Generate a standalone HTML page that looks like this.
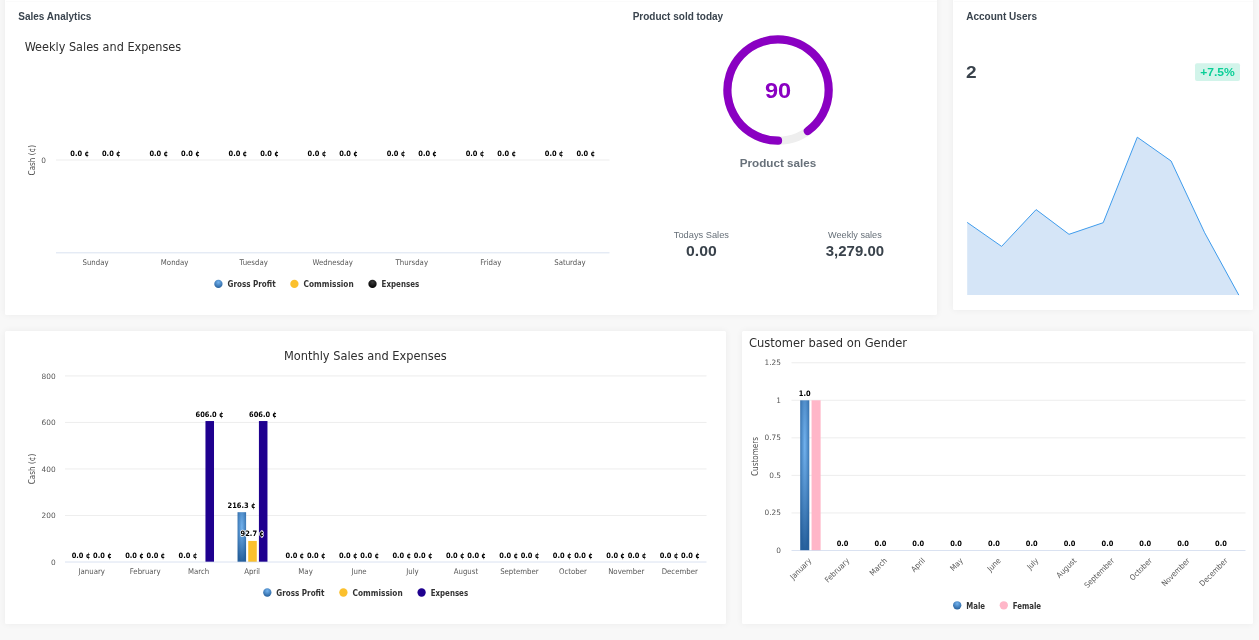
<!DOCTYPE html>
<html lang="en">
<head>
<meta charset="utf-8">
<title>Dashboard</title>
<style>
html,body{margin:0;padding:0}
body{width:1259px;height:640px;overflow:hidden;position:relative;background:#f8f8f8;font-family:"Liberation Sans", "DejaVu Sans", sans-serif}
.card{position:absolute;background:#fff;border-radius:1.5px;box-shadow:0 0 7px rgba(0,0,0,.055)}
svg{position:absolute;left:0;top:0;will-change:transform}
svg text{font-family:"DejaVu Sans Condensed", "DejaVu Sans", "Liberation Sans", sans-serif}
svg text.u{font-family:"Liberation Sans", "DejaVu Sans", sans-serif}
svg text.n{font-family:"DejaVu Sans", "Liberation Sans", sans-serif}
</style>
</head>
<body>
<div class="card" style="left:5px;top:-12px;width:932px;height:327px"></div>
<div class="card" style="left:953px;top:-12px;width:300px;height:322px"></div>
<div class="card" style="left:5px;top:331px;width:721px;height:293px"></div>
<div class="card" style="left:742px;top:331px;width:511px;height:293px"></div>
<svg width="1259" height="640" viewBox="0 0 1259 640">
<defs>
<radialGradient id="gB" cx="0.5" cy="0.3" r="0.7"><stop offset="0" stop-color="#72b2ee"/><stop offset="1" stop-color="#26609c"/></radialGradient>
<radialGradient id="gK" cx="0.5" cy="0.3" r="0.7"><stop offset="0" stop-color="#3a3a3a"/><stop offset="1" stop-color="#000"/></radialGradient>
</defs>
<rect x="6.00" y="1.00" width="931.00" height="1.00" fill="#fbfbfb"/>
<rect x="954.00" y="1.00" width="299.00" height="1.00" fill="#fbfbfb"/>
<text x="18.30" y="20.20" font-size="10.2" font-weight="bold" textLength="73" lengthAdjust="spacingAndGlyphs" class="u" fill="#3a444e">Sales Analytics</text>
<text x="632.70" y="20.20" font-size="10.2" font-weight="bold" textLength="90.5" lengthAdjust="spacingAndGlyphs" class="u" fill="#3a444e">Product sold today</text>
<text x="966.20" y="20.20" font-size="10.2" font-weight="bold" textLength="70.8" lengthAdjust="spacingAndGlyphs" class="u" fill="#3a444e">Account Users</text>
<text x="24.70" y="50.80" font-size="12.05" textLength="156.5" lengthAdjust="spacingAndGlyphs" fill="#2e2e2e">Weekly Sales and Expenses</text>
<path d="M56.00 160.00L609.50 160.00" stroke="#e6e6e6" stroke-width="0.72" fill="none"/>
<path d="M56.00 252.80L609.50 252.80" stroke="#ccd6eb" stroke-width="0.72" fill="none"/>
<text x="46.00" y="163.00" font-size="7.4" text-anchor="end" class="n" fill="#585858">0</text>
<text transform="translate(35.3 160.2) rotate(-90)" font-size="8.05" text-anchor="middle" fill="#4c4c4c">Cash (¢)</text>
<text x="95.54" y="264.90" font-size="7.75" text-anchor="middle" fill="#585858">Sunday</text>
<text x="79.72" y="156.00" font-size="7.4" text-anchor="middle" font-weight="bold" fill="#000">0.0 ¢</text>
<text x="111.35" y="156.00" font-size="7.4" text-anchor="middle" font-weight="bold" fill="#000">0.0 ¢</text>
<text x="174.61" y="264.90" font-size="7.75" text-anchor="middle" fill="#585858">Monday</text>
<text x="158.79" y="156.00" font-size="7.4" text-anchor="middle" font-weight="bold" fill="#000">0.0 ¢</text>
<text x="190.42" y="156.00" font-size="7.4" text-anchor="middle" font-weight="bold" fill="#000">0.0 ¢</text>
<text x="253.68" y="264.90" font-size="7.75" text-anchor="middle" fill="#585858">Tuesday</text>
<text x="237.86" y="156.00" font-size="7.4" text-anchor="middle" font-weight="bold" fill="#000">0.0 ¢</text>
<text x="269.49" y="156.00" font-size="7.4" text-anchor="middle" font-weight="bold" fill="#000">0.0 ¢</text>
<text x="332.75" y="264.90" font-size="7.75" text-anchor="middle" fill="#585858">Wednesday</text>
<text x="316.94" y="156.00" font-size="7.4" text-anchor="middle" font-weight="bold" fill="#000">0.0 ¢</text>
<text x="348.56" y="156.00" font-size="7.4" text-anchor="middle" font-weight="bold" fill="#000">0.0 ¢</text>
<text x="411.82" y="264.90" font-size="7.75" text-anchor="middle" fill="#585858">Thursday</text>
<text x="396.01" y="156.00" font-size="7.4" text-anchor="middle" font-weight="bold" fill="#000">0.0 ¢</text>
<text x="427.64" y="156.00" font-size="7.4" text-anchor="middle" font-weight="bold" fill="#000">0.0 ¢</text>
<text x="490.89" y="264.90" font-size="7.75" text-anchor="middle" fill="#585858">Friday</text>
<text x="475.08" y="156.00" font-size="7.4" text-anchor="middle" font-weight="bold" fill="#000">0.0 ¢</text>
<text x="506.71" y="156.00" font-size="7.4" text-anchor="middle" font-weight="bold" fill="#000">0.0 ¢</text>
<text x="569.96" y="264.90" font-size="7.75" text-anchor="middle" fill="#585858">Saturday</text>
<text x="554.15" y="156.00" font-size="7.4" text-anchor="middle" font-weight="bold" fill="#000">0.0 ¢</text>
<text x="585.78" y="156.00" font-size="7.4" text-anchor="middle" font-weight="bold" fill="#000">0.0 ¢</text>
<circle cx="218.40" cy="283.90" r="4.15" fill="url(#gB)"/>
<text x="227.50" y="287.10" font-size="8.05" font-weight="bold" textLength="48.1" lengthAdjust="spacingAndGlyphs" fill="#333">Gross Profit</text>
<circle cx="294.40" cy="283.90" r="4.15" fill="#fbc02d"/>
<text x="303.60" y="287.10" font-size="8.05" font-weight="bold" textLength="50.1" lengthAdjust="spacingAndGlyphs" fill="#333">Commission</text>
<circle cx="372.50" cy="283.90" r="4.15" fill="url(#gK)"/>
<text x="381.60" y="287.10" font-size="8.05" font-weight="bold" textLength="37.6" lengthAdjust="spacingAndGlyphs" fill="#333">Expenses</text>
<circle cx="778.05" cy="90.05" r="50.65" fill="none" stroke="#eeeeee" stroke-width="8.2"/>
<path d="M778.05 140.7A50.65 50.65 0 1 1 807.82 131.03" fill="none" stroke="#8a00c2" stroke-width="8.2" stroke-linecap="round"/>
<text x="778.00" y="97.90" font-size="21.5" text-anchor="middle" font-weight="bold" textLength="26.2" lengthAdjust="spacingAndGlyphs" class="u" fill="#8a00c2">90</text>
<text x="778.00" y="167.00" font-size="11.7" text-anchor="middle" font-weight="bold" textLength="76.6" lengthAdjust="spacingAndGlyphs" class="u" fill="#68717a">Product sales</text>
<text x="701.40" y="238.20" font-size="9.8" text-anchor="middle" textLength="55.2" lengthAdjust="spacingAndGlyphs" class="u" fill="#666f78">Todays Sales</text>
<text x="701.40" y="256.00" font-size="13.8" text-anchor="middle" font-weight="bold" textLength="30.7" lengthAdjust="spacingAndGlyphs" class="u" fill="#39424b">0.00</text>
<text x="854.90" y="238.20" font-size="9.8" text-anchor="middle" textLength="53.8" lengthAdjust="spacingAndGlyphs" class="u" fill="#666f78">Weekly sales</text>
<text x="854.90" y="256.00" font-size="13.8" text-anchor="middle" font-weight="bold" textLength="58.3" lengthAdjust="spacingAndGlyphs" class="u" fill="#39424b">3,279.00</text>
<text x="966.00" y="78.20" font-size="17" font-weight="bold" textLength="10.6" lengthAdjust="spacingAndGlyphs" class="u" fill="#39424b">2</text>
<rect x="1195.00" y="63.30" width="45.00" height="17.70" fill="#d2f4ea" rx="2"/>
<text x="1217.50" y="76.00" font-size="11.8" text-anchor="middle" font-weight="bold" textLength="34.6" lengthAdjust="spacingAndGlyphs" class="u" fill="#0acf97">+7.5%</text>
<path d="M967.2 222.4L1001.6 246.4L1036.1 209.6L1069.0 234.3L1103.2 222.7L1137.3 137.2L1171.1 161.0L1204.7 232.8L1238.8 295.1L1238.8 295.1L967.2 295.1Z" fill="#d5e5f7"/>
<path d="M967.2 222.4L1001.6 246.4L1036.1 209.6L1069.0 234.3L1103.2 222.7L1137.3 137.2L1171.1 161.0L1204.7 232.8L1238.8 295.1" fill="none" stroke="#3e9bec" stroke-width="1" stroke-linejoin="round"/>
<text x="365.30" y="359.90" font-size="12.05" text-anchor="middle" textLength="162.7" lengthAdjust="spacingAndGlyphs" fill="#2e2e2e">Monthly Sales and Expenses</text>
<path d="M65.00 515.48L706.50 515.48" stroke="#e6e6e6" stroke-width="0.72" fill="none"/>
<text x="55.60" y="518.08" font-size="7.4" text-anchor="end" class="n" fill="#585858">200</text>
<path d="M65.00 468.96L706.50 468.96" stroke="#e6e6e6" stroke-width="0.72" fill="none"/>
<text x="55.60" y="471.56" font-size="7.4" text-anchor="end" class="n" fill="#585858">400</text>
<path d="M65.00 422.44L706.50 422.44" stroke="#e6e6e6" stroke-width="0.72" fill="none"/>
<text x="55.60" y="425.04" font-size="7.4" text-anchor="end" class="n" fill="#585858">600</text>
<path d="M65.00 375.92L706.50 375.92" stroke="#e6e6e6" stroke-width="0.72" fill="none"/>
<text x="55.60" y="378.52" font-size="7.4" text-anchor="end" class="n" fill="#585858">800</text>
<text x="55.60" y="564.60" font-size="7.4" text-anchor="end" class="n" fill="#585858">0</text>
<text transform="translate(35.3 469) rotate(-90)" font-size="8.05" text-anchor="middle" fill="#4c4c4c">Cash (¢)</text>
<text x="91.73" y="574.00" font-size="7.75" text-anchor="middle" fill="#585858">January</text>
<text x="145.19" y="574.00" font-size="7.75" text-anchor="middle" fill="#585858">February</text>
<text x="198.65" y="574.00" font-size="7.75" text-anchor="middle" fill="#585858">March</text>
<rect x="205.46" y="421.04" width="8.55" height="140.96" fill="#1f008f"/>
<text x="252.10" y="574.00" font-size="7.75" text-anchor="middle" fill="#585858">April</text>
<rect x="237.54" y="512.19" width="8.55" height="49.81" fill="url(#gB)"/>
<rect x="248.23" y="540.94" width="8.55" height="21.06" fill="#fbc02d"/>
<rect x="258.92" y="421.04" width="8.55" height="140.96" fill="#1f008f"/>
<text x="305.56" y="574.00" font-size="7.75" text-anchor="middle" fill="#585858">May</text>
<text x="359.02" y="574.00" font-size="7.75" text-anchor="middle" fill="#585858">June</text>
<text x="412.48" y="574.00" font-size="7.75" text-anchor="middle" fill="#585858">July</text>
<text x="465.94" y="574.00" font-size="7.75" text-anchor="middle" fill="#585858">August</text>
<text x="519.40" y="574.00" font-size="7.75" text-anchor="middle" fill="#585858">September</text>
<text x="572.85" y="574.00" font-size="7.75" text-anchor="middle" fill="#585858">October</text>
<text x="626.31" y="574.00" font-size="7.75" text-anchor="middle" fill="#585858">November</text>
<text x="679.77" y="574.00" font-size="7.75" text-anchor="middle" fill="#585858">December</text>
<path d="M65.00 562.00L706.50 562.00" stroke="#ccd6eb" stroke-width="0.72" fill="none"/>
<text x="81.04" y="557.60" font-size="7.4" text-anchor="middle" font-weight="bold" fill="#000" stroke="#fff" stroke-width="1.3" paint-order="stroke" stroke-linejoin="round">0.0 ¢</text>
<text x="102.42" y="557.60" font-size="7.4" text-anchor="middle" font-weight="bold" fill="#000" stroke="#fff" stroke-width="1.3" paint-order="stroke" stroke-linejoin="round">0.0 ¢</text>
<text x="134.50" y="557.60" font-size="7.4" text-anchor="middle" font-weight="bold" fill="#000" stroke="#fff" stroke-width="1.3" paint-order="stroke" stroke-linejoin="round">0.0 ¢</text>
<text x="155.88" y="557.60" font-size="7.4" text-anchor="middle" font-weight="bold" fill="#000" stroke="#fff" stroke-width="1.3" paint-order="stroke" stroke-linejoin="round">0.0 ¢</text>
<text x="187.95" y="557.60" font-size="7.4" text-anchor="middle" font-weight="bold" fill="#000" stroke="#fff" stroke-width="1.3" paint-order="stroke" stroke-linejoin="round">0.0 ¢</text>
<text x="209.54" y="416.74" font-size="7.4" text-anchor="middle" font-weight="bold" fill="#000" stroke="#fff" stroke-width="1.3" paint-order="stroke" stroke-linejoin="round">606.0 ¢</text>
<text x="241.61" y="507.89" font-size="7.4" text-anchor="middle" font-weight="bold" fill="#000" stroke="#fff" stroke-width="1.3" paint-order="stroke" stroke-linejoin="round">216.3 ¢</text>
<text x="252.30" y="536.14" font-size="7.4" text-anchor="middle" font-weight="bold" fill="#000" stroke="#fff" stroke-width="1.3" paint-order="stroke" stroke-linejoin="round">92.7 ¢</text>
<text x="263.00" y="416.74" font-size="7.4" text-anchor="middle" font-weight="bold" fill="#000" stroke="#fff" stroke-width="1.3" paint-order="stroke" stroke-linejoin="round">606.0 ¢</text>
<text x="294.87" y="557.60" font-size="7.4" text-anchor="middle" font-weight="bold" fill="#000" stroke="#fff" stroke-width="1.3" paint-order="stroke" stroke-linejoin="round">0.0 ¢</text>
<text x="316.25" y="557.60" font-size="7.4" text-anchor="middle" font-weight="bold" fill="#000" stroke="#fff" stroke-width="1.3" paint-order="stroke" stroke-linejoin="round">0.0 ¢</text>
<text x="348.33" y="557.60" font-size="7.4" text-anchor="middle" font-weight="bold" fill="#000" stroke="#fff" stroke-width="1.3" paint-order="stroke" stroke-linejoin="round">0.0 ¢</text>
<text x="369.71" y="557.60" font-size="7.4" text-anchor="middle" font-weight="bold" fill="#000" stroke="#fff" stroke-width="1.3" paint-order="stroke" stroke-linejoin="round">0.0 ¢</text>
<text x="401.79" y="557.60" font-size="7.4" text-anchor="middle" font-weight="bold" fill="#000" stroke="#fff" stroke-width="1.3" paint-order="stroke" stroke-linejoin="round">0.0 ¢</text>
<text x="423.17" y="557.60" font-size="7.4" text-anchor="middle" font-weight="bold" fill="#000" stroke="#fff" stroke-width="1.3" paint-order="stroke" stroke-linejoin="round">0.0 ¢</text>
<text x="455.25" y="557.60" font-size="7.4" text-anchor="middle" font-weight="bold" fill="#000" stroke="#fff" stroke-width="1.3" paint-order="stroke" stroke-linejoin="round">0.0 ¢</text>
<text x="476.63" y="557.60" font-size="7.4" text-anchor="middle" font-weight="bold" fill="#000" stroke="#fff" stroke-width="1.3" paint-order="stroke" stroke-linejoin="round">0.0 ¢</text>
<text x="508.70" y="557.60" font-size="7.4" text-anchor="middle" font-weight="bold" fill="#000" stroke="#fff" stroke-width="1.3" paint-order="stroke" stroke-linejoin="round">0.0 ¢</text>
<text x="530.09" y="557.60" font-size="7.4" text-anchor="middle" font-weight="bold" fill="#000" stroke="#fff" stroke-width="1.3" paint-order="stroke" stroke-linejoin="round">0.0 ¢</text>
<text x="562.16" y="557.60" font-size="7.4" text-anchor="middle" font-weight="bold" fill="#000" stroke="#fff" stroke-width="1.3" paint-order="stroke" stroke-linejoin="round">0.0 ¢</text>
<text x="583.55" y="557.60" font-size="7.4" text-anchor="middle" font-weight="bold" fill="#000" stroke="#fff" stroke-width="1.3" paint-order="stroke" stroke-linejoin="round">0.0 ¢</text>
<text x="615.62" y="557.60" font-size="7.4" text-anchor="middle" font-weight="bold" fill="#000" stroke="#fff" stroke-width="1.3" paint-order="stroke" stroke-linejoin="round">0.0 ¢</text>
<text x="637.00" y="557.60" font-size="7.4" text-anchor="middle" font-weight="bold" fill="#000" stroke="#fff" stroke-width="1.3" paint-order="stroke" stroke-linejoin="round">0.0 ¢</text>
<text x="669.08" y="557.60" font-size="7.4" text-anchor="middle" font-weight="bold" fill="#000" stroke="#fff" stroke-width="1.3" paint-order="stroke" stroke-linejoin="round">0.0 ¢</text>
<text x="690.46" y="557.60" font-size="7.4" text-anchor="middle" font-weight="bold" fill="#000" stroke="#fff" stroke-width="1.3" paint-order="stroke" stroke-linejoin="round">0.0 ¢</text>
<circle cx="267.30" cy="592.50" r="4.15" fill="url(#gB)"/>
<text x="276.30" y="595.70" font-size="8.05" font-weight="bold" textLength="48.1" lengthAdjust="spacingAndGlyphs" fill="#333">Gross Profit</text>
<circle cx="343.40" cy="592.50" r="4.15" fill="#fbc02d"/>
<text x="352.60" y="595.70" font-size="8.05" font-weight="bold" textLength="50.1" lengthAdjust="spacingAndGlyphs" fill="#333">Commission</text>
<circle cx="421.60" cy="592.50" r="4.15" fill="#1f008f"/>
<text x="430.70" y="595.70" font-size="8.05" font-weight="bold" textLength="37.4" lengthAdjust="spacingAndGlyphs" fill="#333">Expenses</text>
<text x="749.00" y="347.00" font-size="12.05" textLength="158" lengthAdjust="spacingAndGlyphs" fill="#2e2e2e">Customer based on Gender</text>
<path d="M791.50 512.95L1245.50 512.95" stroke="#e6e6e6" stroke-width="0.72" fill="none"/>
<text x="781.00" y="515.45" font-size="7.4" text-anchor="end" class="n" fill="#585858">0.25</text>
<path d="M791.50 475.40L1245.50 475.40" stroke="#e6e6e6" stroke-width="0.72" fill="none"/>
<text x="781.00" y="477.90" font-size="7.4" text-anchor="end" class="n" fill="#585858">0.5</text>
<path d="M791.50 437.85L1245.50 437.85" stroke="#e6e6e6" stroke-width="0.72" fill="none"/>
<text x="781.00" y="440.35" font-size="7.4" text-anchor="end" class="n" fill="#585858">0.75</text>
<path d="M791.50 400.30L1245.50 400.30" stroke="#e6e6e6" stroke-width="0.72" fill="none"/>
<text x="781.00" y="402.80" font-size="7.4" text-anchor="end" class="n" fill="#585858">1</text>
<path d="M791.50 362.75L1245.50 362.75" stroke="#e6e6e6" stroke-width="0.72" fill="none"/>
<text x="781.00" y="365.25" font-size="7.4" text-anchor="end" class="n" fill="#585858">1.25</text>
<text x="781.00" y="552.90" font-size="7.4" text-anchor="end" class="n" fill="#585858">0</text>
<text transform="translate(758.2 456.5) rotate(-90)" font-size="8.05" text-anchor="middle" fill="#4c4c4c">Customers</text>
<text transform="translate(812.02 561.20) rotate(-45)" font-size="7.75" text-anchor="end" fill="#585858">January</text>
<rect x="800.20" y="400.30" width="9.08" height="150.20" fill="url(#gB)"/>
<rect x="811.55" y="400.30" width="9.08" height="150.20" fill="#ffb6c8"/>
<text x="804.74" y="395.80" font-size="7.4" text-anchor="middle" font-weight="bold" fill="#000">1.0</text>
<text transform="translate(849.85 561.20) rotate(-45)" font-size="7.75" text-anchor="end" fill="#585858">February</text>
<text x="842.58" y="546.00" font-size="7.4" text-anchor="middle" font-weight="bold" fill="#000">0.0</text>
<text transform="translate(887.68 561.20) rotate(-45)" font-size="7.75" text-anchor="end" fill="#585858">March</text>
<text x="880.41" y="546.00" font-size="7.4" text-anchor="middle" font-weight="bold" fill="#000">0.0</text>
<text transform="translate(925.52 561.20) rotate(-45)" font-size="7.75" text-anchor="end" fill="#585858">April</text>
<text x="918.24" y="546.00" font-size="7.4" text-anchor="middle" font-weight="bold" fill="#000">0.0</text>
<text transform="translate(963.35 561.20) rotate(-45)" font-size="7.75" text-anchor="end" fill="#585858">May</text>
<text x="956.08" y="546.00" font-size="7.4" text-anchor="middle" font-weight="bold" fill="#000">0.0</text>
<text transform="translate(1001.18 561.20) rotate(-45)" font-size="7.75" text-anchor="end" fill="#585858">June</text>
<text x="993.91" y="546.00" font-size="7.4" text-anchor="middle" font-weight="bold" fill="#000">0.0</text>
<text transform="translate(1039.02 561.20) rotate(-45)" font-size="7.75" text-anchor="end" fill="#585858">July</text>
<text x="1031.74" y="546.00" font-size="7.4" text-anchor="middle" font-weight="bold" fill="#000">0.0</text>
<text transform="translate(1076.85 561.20) rotate(-45)" font-size="7.75" text-anchor="end" fill="#585858">August</text>
<text x="1069.58" y="546.00" font-size="7.4" text-anchor="middle" font-weight="bold" fill="#000">0.0</text>
<text transform="translate(1114.68 561.20) rotate(-45)" font-size="7.75" text-anchor="end" fill="#585858">September</text>
<text x="1107.41" y="546.00" font-size="7.4" text-anchor="middle" font-weight="bold" fill="#000">0.0</text>
<text transform="translate(1152.52 561.20) rotate(-45)" font-size="7.75" text-anchor="end" fill="#585858">October</text>
<text x="1145.24" y="546.00" font-size="7.4" text-anchor="middle" font-weight="bold" fill="#000">0.0</text>
<text transform="translate(1190.35 561.20) rotate(-45)" font-size="7.75" text-anchor="end" fill="#585858">November</text>
<text x="1183.08" y="546.00" font-size="7.4" text-anchor="middle" font-weight="bold" fill="#000">0.0</text>
<text transform="translate(1228.18 561.20) rotate(-45)" font-size="7.75" text-anchor="end" fill="#585858">December</text>
<text x="1220.91" y="546.00" font-size="7.4" text-anchor="middle" font-weight="bold" fill="#000">0.0</text>
<path d="M791.50 550.50L1245.50 550.50" stroke="#ccd6eb" stroke-width="0.72" fill="none"/>
<circle cx="957.20" cy="605.30" r="4.15" fill="url(#gB)"/>
<text x="966.30" y="608.50" font-size="8.05" font-weight="bold" textLength="18.8" lengthAdjust="spacingAndGlyphs" fill="#333">Male</text>
<circle cx="1003.80" cy="605.30" r="4.15" fill="#ffb6c8"/>
<text x="1012.70" y="608.50" font-size="8.05" font-weight="bold" textLength="28.4" lengthAdjust="spacingAndGlyphs" fill="#333">Female</text>
</svg>
</body>
</html>
